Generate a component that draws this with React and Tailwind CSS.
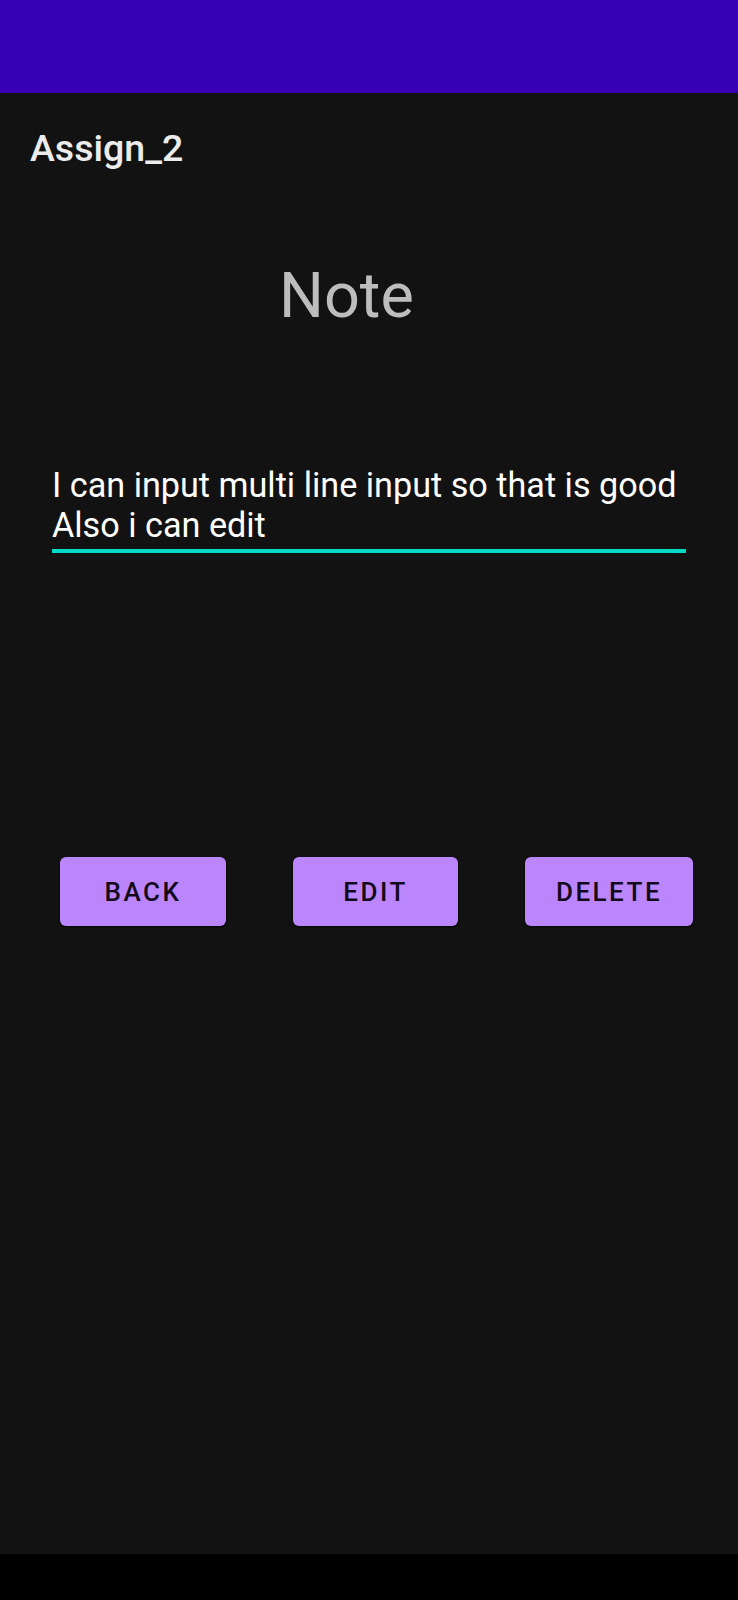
const BUTTONS = [
  { label: 'BACK',   w: 'w-[166px]' },
  { label: 'EDIT',   w: 'w-[165px]' },
  { label: 'DELETE', w: 'w-[168px]' },
];

export default function App() {
  return (
    <div className="min-h-[1600px] flex flex-col bg-[#121212] font-['Roboto',sans-serif]">
      {/* status bar */}
      <div className="h-[93px] bg-[#3700b3]" />

      <main className="flex-1 flex flex-col">
        {/* app bar title */}
        <h1 className="mt-[33px] pl-[30px] text-[37.5px] leading-[45px] font-medium text-[#ececec]">
          Assign_2
        </h1>

        {/* heading */}
        <h2 className="mt-[88px] pl-[279px] text-[63px] leading-[74px] font-normal text-[#bdbdbd]">
          Note
        </h2>

        {/* multi line edit text */}
        <div className="mt-[132px] ml-[52px] w-[634px]">
          <p className="text-[34.2px] leading-[40px] text-white whitespace-pre">
            {'I can input multi line input so that is good\nAlso i can edit'}
          </p>
          <div className="mt-[4px] h-[4px] bg-[#03dac5]" />
        </div>

        {/* actions */}
        <div className="mt-[304px] pl-[60px] flex gap-[67px]">
          {BUTTONS.map(b => (
            <button
              key={b.label}
              type="button"
              className={`${b.w} h-[69px] rounded-[6px] bg-[#bb86fc] shadow-[0_1px_3px_rgba(0,0,0,0.6)]
                pt-[2px] text-[26px] font-medium tracking-[2.5px] text-[#120a1a]`}
            >
              {b.label}
            </button>
          ))}
        </div>
      </main>

      {/* navigation bar */}
      <div className="h-[46px] bg-black" />
    </div>
  );
}
